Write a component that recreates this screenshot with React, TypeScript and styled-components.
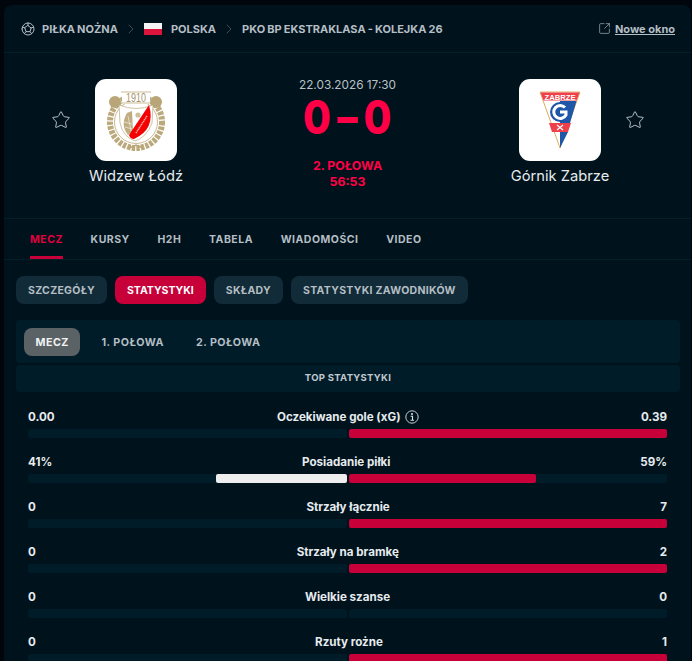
import React from 'react';
import styled, { createGlobalStyle } from 'styled-components';
import { ChevronRight, SquareArrowOutUpRight, Star } from 'lucide-react';
import { TbBallFootball } from 'react-icons/tb';

const GlobalStyle = createGlobalStyle`
  html, body {
    margin: 0;
    height: 661px;
    overflow: hidden;
    background: #00060c;
  }
  body {
    font-family: Inter, "Liberation Sans", sans-serif;
    color: #c8d0d5;
  }
`;

const stats = [
  { label: 'Oczekiwane gole (xG)', home: '0.00', away: '0.39', homeWidth: 0, awayWidth: 100, info: true },
  { label: 'Posiadanie piłki', home: '41%', away: '59%', homeWidth: 41, awayWidth: 59 },
  { label: 'Strzały łącznie', home: '0', away: '7', homeWidth: 0, awayWidth: 100 },
  { label: 'Strzały na bramkę', home: '0', away: '2', homeWidth: 0, awayWidth: 100 },
  { label: 'Wielkie szanse', home: '0', away: '0', homeWidth: 0, awayWidth: 0 },
  { label: 'Rzuty rożne', home: '0', away: '1', homeWidth: 0, awayWidth: 100 },
];

const WidzewCrest = () => (
  <svg width="82" height="82" viewBox="0 0 82 82">
    <circle cx="41" cy="43" r="26" fill="none" stroke="#bba97c" strokeWidth="6" strokeDasharray="3.4 1.2" />
    <circle cx="41" cy="43" r="21.5" fill="none" stroke="#bba97c" strokeWidth=".8" />
    <circle cx="20" cy="23" r="6" fill="#b8a678" />
    <circle cx="61" cy="23" r="6" fill="#b8a678" />
    <rect x="27" y="12" width="28" height="13" fill="#fff" />
    <path d="M26 24 H56 M26 13 H56" stroke="#bba97c" strokeWidth=".8" />
    <text x="41" y="23" textAnchor="middle" fontFamily="Liberation Sans" fontSize="12" textLength="20" lengthAdjust="spacingAndGlyphs" fill="#a8946a">1910</text>
    <path d="M24 26 Q41 33 58 26 L57 44 Q52 58 40 62 Q28 58 25 44 Z" fill="#fff" stroke="#bba97c" strokeWidth=".7" />
    <path d="M32 34 L37 32 L38 52 L33 56 Q25 46 32 34 Z" fill="#bfac80" />
    <path d="M33 37 L36 52 M29 43 L37 45 M30 48 L37 50" stroke="#f4efe2" strokeWidth=".7" />
    <circle cx="43" cy="36" r="2.6" fill="#cdbf9e" />
    <path d="M54 26 L34 56 Q35 60 39 60 Q61 50 54 26 Z" fill="#f40000" />
    <path d="M41 54 L52 37" stroke="#ffb4b4" strokeWidth="1.6" strokeDasharray="1.2 .7" />
    <path d="M34 69 L41 66 L48 69" stroke="#b8a678" strokeWidth="1.5" fill="none" />
  </svg>
);

const GornikCrest = () => (
  <svg width="82" height="82" viewBox="0 0 82 82">
    <path d="M21 13 H61 L41 69 Z" fill="#fff" stroke="#dcae62" strokeWidth="1" />
    <path d="M21.5 13.5 H60.5 L57.5 21.5 H24.5 Z" fill="#ee3f4a" />
    <text x="41" y="20.5" textAnchor="middle" fontFamily="Liberation Sans" fontWeight="700" fontSize="7.6" textLength="31" lengthAdjust="spacingAndGlyphs" fill="#fff">ZABRZE</text>
    <path d="M41 22 H57.5 L51 44 H41 Z" fill="#1f56a8" />
    <path d="M41 23 A10 10 0 0 0 41 43 Z" fill="#1f56a8" />
    <path d="M46 28.5 A6.5 6.5 0 1 0 47 36 V33 H41" fill="none" stroke="#fff" strokeWidth="3" />
    <path d="M30 44 H52 L49 53 H33 Z" fill="#ee3f4a" />
    <path d="M38 46 L44 51 M44 46 L38 51" stroke="#fff" strokeWidth="1.2" />
    <path d="M41 53 H49 L41 69 Z" fill="#1f56a8" />
  </svg>
);

const InfoIcon = () => (
  <svg width="14" height="14" viewBox="0 0 14 14" fill="none">
    <circle cx="7" cy="7" r="6.2" stroke="#c8d0d5" strokeWidth="1" />
    <circle cx="7" cy="4" r="1" fill="#dfe4e7" />
    <path d="M5.6 6.2 H7.5 V10 M5.5 10.2 H9" stroke="#dfe4e7" strokeWidth="1.1" />
  </svg>
);

const Card = styled.div`
  margin: 5px 1px 0 4px;
  background: #00121c;
  border-radius: 8px 8px 0 0;
  height: 656px;
  overflow: hidden;
`;

const Breadcrumbs = styled.header`
  display: flex;
  align-items: center;
  height: 48px;
  padding: 0 16px;
  border-bottom: 1px solid #03202a;
  box-sizing: border-box;
`;

const Crumb = styled.span`
  font-size: 11px;
  font-weight: 700;
  word-spacing: -0.5px;
  color: #b4bec4;
  white-space: nowrap;
`;

const BallIcon = styled(TbBallFootball)`
  width: 16px;
  height: 16px;
  margin-right: 6px;
  color: #b4bec4;
  stroke-width: 1.5;
`;

const Separator = styled(ChevronRight)`
  width: 16px;
  height: 16px;
  margin: 0 5px;
  color: #4b5a62;
  stroke-width: 1.2;
`;

const Flag = styled.span`
  width: 18px;
  height: 12px;
  margin-right: 9px;
  background: linear-gradient(#f4f4f4 50%, #dc143c 50%);
`;

const NewWindow = styled.a`
  display: flex;
  align-items: center;
  gap: 4px;
  margin-left: auto;
  font-size: 11px;
  font-weight: 700;
  color: #b4bec4;
  text-decoration: underline;
`;

const OpenIcon = styled(SquareArrowOutUpRight)`
  width: 13px;
  height: 13px;
  stroke-width: 1.2;
`;

const MatchRow = styled.section`
  display: grid;
  grid-template-columns: 1fr 200px 1fr;
  height: 166px;
  border-bottom: 1px solid #03202a;
  box-sizing: border-box;
`;

const Team = styled.div<{ $away?: boolean }>`
  display: flex;
  flex-direction: ${props => (props.$away ? 'row-reverse' : 'row')};
  align-items: flex-start;
  gap: 24px;
  padding: 26px 46px 0 ${props => (props.$away ? '46px' : '47px')};
`;

const FavouriteStar = styled(Star)`
  width: 20px;
  height: 20px;
  margin-top: 31px;
  color: #c8d0d5;
  stroke-width: 1.1;
`;

const TeamInfo = styled.div`
  display: flex;
  flex-direction: column;
  align-items: center;
  width: 82px;
`;

const LogoBox = styled.div`
  width: 82px;
  height: 82px;
  background: #fff;
  border-radius: 11px;
`;

const TeamName = styled.div`
  margin-top: 6px;
  font-size: 14.7px;
  line-height: 18px;
  color: #e6ebee;
  white-space: nowrap;
`;

const Center = styled.div`
  display: flex;
  flex-direction: column;
  align-items: center;
  padding-top: 25px;
`;

const Kickoff = styled.div`
  font-size: 11.8px;
  line-height: 15px;
  color: #b8c2c8;
`;

const Score = styled.div`
  margin-top: -1px;
  font-size: 46px;
  line-height: 50px;
  font-weight: 800;
  color: #ff0046;
  display: flex;
  gap: 7px;
  transform: scaleX(0.88);
`;

const Status = styled.div`
  margin-top: 16px;
  font-size: 12.3px;
  line-height: 16px;
  font-weight: 700;
  text-align: center;
  color: #ff0046;
`;

const Tabs = styled.nav`
  display: flex;
  gap: 27.7px;
  height: 40px;
  padding: 0 26px;
  border-bottom: 1px solid #03202a;
`;

const Tab = styled.a<{ $active?: boolean }>`
  display: flex;
  align-items: center;
  height: 40px;
  box-sizing: border-box;
  padding-top: 3px;
  font-size: 10.5px;
  font-weight: 700;
  letter-spacing: 0.5px;
  color: ${props => (props.$active ? '#e4003f' : '#b4bec4')};
  border-bottom: 3px solid ${props => (props.$active ? '#c8003a' : 'transparent')};
`;

const Pills = styled.div`
  display: flex;
  gap: 8px;
  padding: 16px 12px;
`;

const Pill = styled.a<{ $active?: boolean }>`
  display: flex;
  align-items: center;
  height: 28px;
  padding: 0 12px;
  border-radius: 8px;
  font-size: 10.5px;
  font-weight: 700;
  letter-spacing: ${props => (props.$active ? '0' : '0.3px')};
  background: ${props => (props.$active ? '#c8003a' : '#112b38')};
  color: ${props => (props.$active ? '#fff' : '#b4bec4')};
`;

const Panel = styled.div`
  margin: 0 11px 2px 12px;
  background: #001c29;
  border-radius: 4px;
`;

const PeriodBar = styled(Panel)`
  display: flex;
  padding: 8px 8px 7px;
`;

const Period = styled.a<{ $active?: boolean }>`
  display: flex;
  align-items: center;
  height: 28px;
  padding: 0 ${props => (props.$active ? '11.5px' : '16px')};
  margin-right: ${props => (props.$active ? '5px' : '0')};
  border-radius: 8px;
  font-size: 10.7px;
  font-weight: 700;
  letter-spacing: 0.5px;
  background: ${props => (props.$active ? '#5b6266' : 'transparent')};
  color: ${props => (props.$active ? '#f0f2f3' : '#b4bec4')};
`;

const SectionTitle = styled(Panel)`
  height: 27px;
  line-height: 26px;
  text-align: center;
  font-size: 9.5px;
  font-weight: 700;
  letter-spacing: 0.3px;
  color: #c0c9ce;
`;

const StatList = styled.div`
  display: flex;
  flex-direction: column;
  gap: 15px;
  padding: 14px 24px 0;
`;

const Stat = styled.div`
  display: flex;
  flex-direction: column;
  gap: 4px;
`;

const StatHead = styled.div`
  display: flex;
  align-items: center;
  justify-content: space-between;
  height: 17px;
  font-size: 11.6px;
  font-weight: 700;
  color: #e6ebee;
`;

const StatLabel = styled.span`
  display: flex;
  align-items: center;
  gap: 4px;
`;

const Bars = styled.div`
  display: grid;
  grid-template-columns: 1fr 1fr;
  gap: 2px;
`;

const Track = styled.div<{ $home?: boolean }>`
  display: flex;
  justify-content: ${props => (props.$home ? 'flex-end' : 'flex-start')};
  height: 9px;
  background: #001c29;
  border-radius: 2px;
`;

const Fill = styled.div<{ $home?: boolean }>`
  background: ${props => (props.$home ? '#eeeeee' : '#c8003a')};
  border-radius: 2px;
`;

const App = () => (
  <>
    <GlobalStyle />
    <Card>
      <Breadcrumbs>
        <BallIcon />
        <Crumb>PIŁKA NOŻNA</Crumb>
        <Separator />
        <Flag />
        <Crumb>POLSKA</Crumb>
        <Separator />
        <Crumb>PKO BP EKSTRAKLASA - KOLEJKA 26</Crumb>
        <NewWindow>
          <OpenIcon />
          Nowe okno
        </NewWindow>
      </Breadcrumbs>

      <MatchRow>
        <Team>
          <FavouriteStar />
          <TeamInfo>
            <LogoBox><WidzewCrest /></LogoBox>
            <TeamName>Widzew Łódź</TeamName>
          </TeamInfo>
        </Team>
        <Center>
          <Kickoff>22.03.2026 17:30</Kickoff>
          <Score>
            <span>0</span><span>–</span><span>0</span>
          </Score>
          <Status>2. POŁOWA<br />56:53</Status>
        </Center>
        <Team $away>
          <FavouriteStar />
          <TeamInfo>
            <LogoBox><GornikCrest /></LogoBox>
            <TeamName>Górnik Zabrze</TeamName>
          </TeamInfo>
        </Team>
      </MatchRow>

      <Tabs>
        <Tab $active>MECZ</Tab>
        <Tab>KURSY</Tab>
        <Tab>H2H</Tab>
        <Tab>TABELA</Tab>
        <Tab>WIADOMOŚCI</Tab>
        <Tab>VIDEO</Tab>
      </Tabs>

      <Pills>
        <Pill>SZCZEGÓŁY</Pill>
        <Pill $active>STATYSTYKI</Pill>
        <Pill>SKŁADY</Pill>
        <Pill>STATYSTYKI ZAWODNIKÓW</Pill>
      </Pills>

      <PeriodBar>
        <Period $active>MECZ</Period>
        <Period>1. POŁOWA</Period>
        <Period>2. POŁOWA</Period>
      </PeriodBar>
      <SectionTitle>TOP STATYSTYKI</SectionTitle>

      <StatList>
        {stats.map(stat => (
          <Stat key={stat.label}>
            <StatHead>
              <span>{stat.home}</span>
              <StatLabel>
                {stat.label}
                {stat.info && <InfoIcon />}
              </StatLabel>
              <span>{stat.away}</span>
            </StatHead>
            <Bars>
              <Track $home>
                <Fill $home style={{ width: `${stat.homeWidth}%` }} />
              </Track>
              <Track>
                <Fill style={{ width: `${stat.awayWidth}%` }} />
              </Track>
            </Bars>
          </Stat>
        ))}
      </StatList>
    </Card>
  </>
);

export default App;
